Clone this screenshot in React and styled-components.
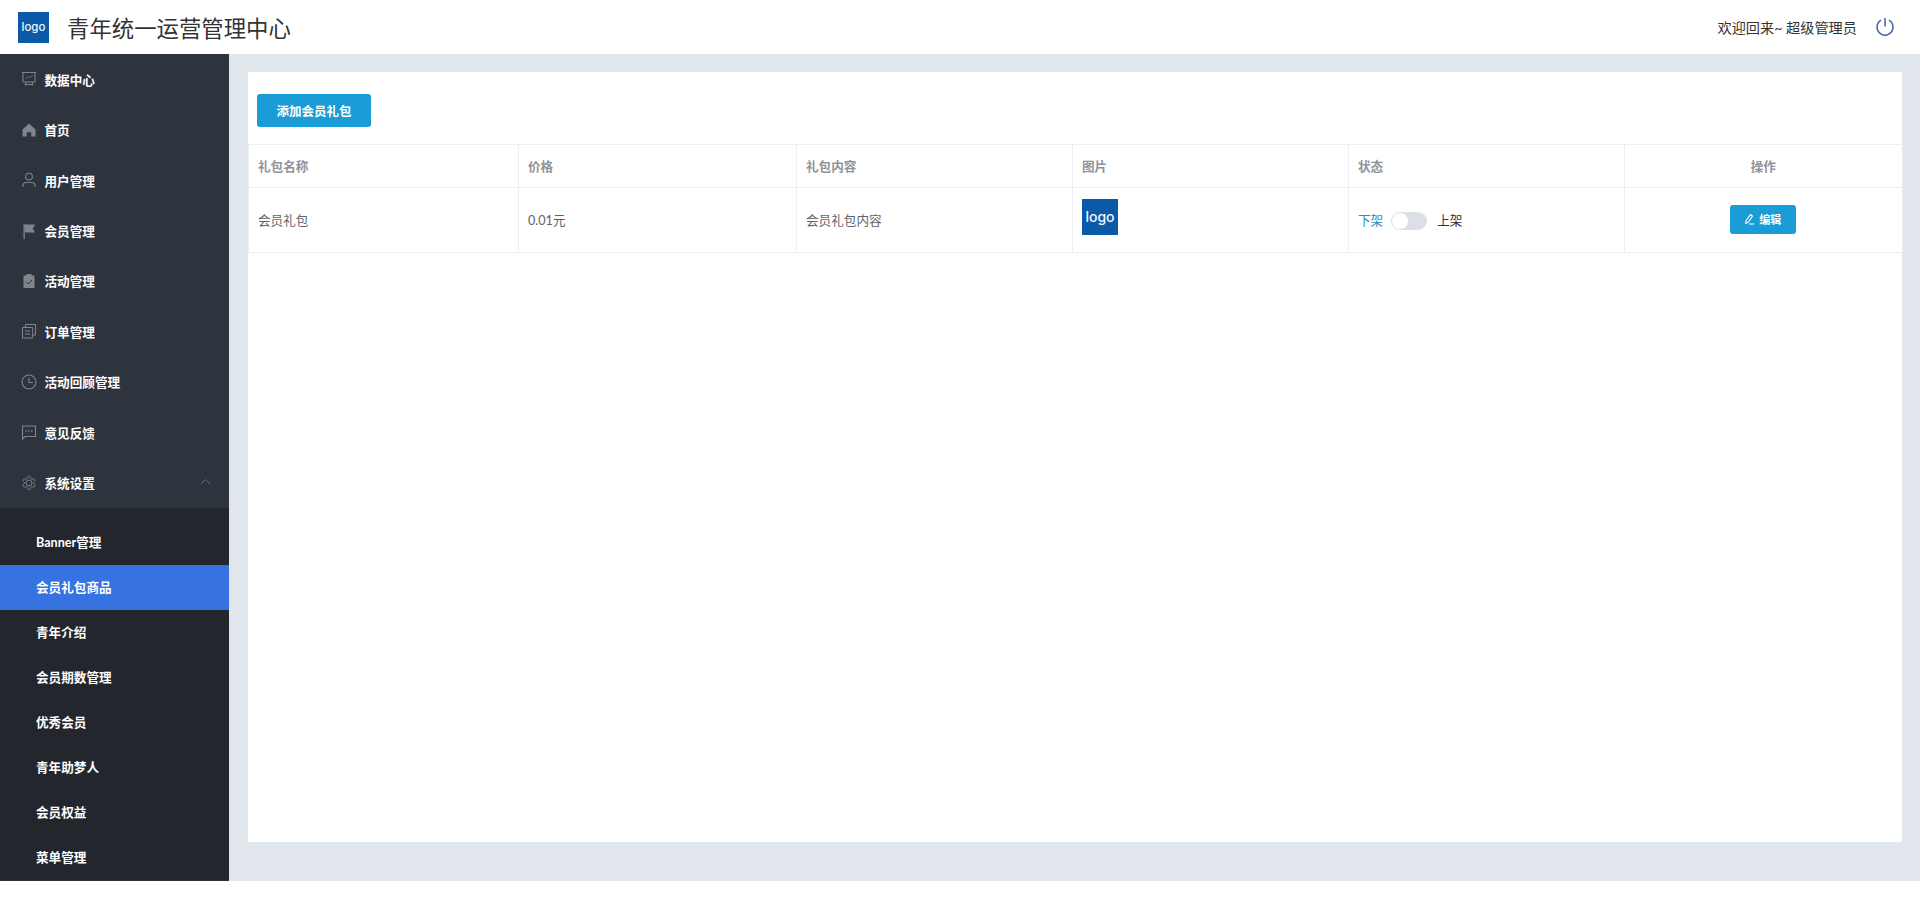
import React from 'react';
import styled, { createGlobalStyle } from 'styled-components';

const GlobalStyle = createGlobalStyle`
    html, body {
        margin: 0;
        padding: 0;
        background: #fff;
        font-family: "Lato", "Noto Sans CJK SC", sans-serif;
        overflow: hidden;
    }
`

const Page = styled.div`
    height: 881px;
    display: flex;
    flex-direction: column;
`

const TopBar = styled.header`
    height: 54px;
    flex: none;
    display: flex;
    align-items: center;
    padding: 0 25px 0 18px;
    background: #fff;
`

const LogoBox = styled.div`
    width: ${p => p.$size}px;
    height: ${p => p.$size}px;
    background: #0b5aa8;
    color: #f2f6fb;
    font-family: "Inter", sans-serif;
    font-weight: 500;
    font-size: ${p => p.$font}px;
    display: flex;
    align-items: center;
    justify-content: center;
    flex: none;
    margin-bottom: ${p => p.$lift || 0}px;
`

const Title = styled.h1`
    margin: 0 0 0 18px;
    font-size: 22.4px;
    font-weight: 400;
    color: #333;
    flex: 1;
`

const Welcome = styled.span`
    font-size: 14.2px;
    color: #333;
    margin-right: 18px;
`

const Body = styled.div`
    flex: 1;
    display: flex;
    min-height: 0;
`

const Sidebar = styled.aside`
    width: 229px;
    flex: none;
    background: #2e343e;
    overflow: hidden;
`

const NavRow = styled.div`
    height: 50.44px;
    box-sizing: border-box;
    padding: 0 18px 0 21px;
    display: flex;
    align-items: center;
    color: #fff;
    font-size: 12.6px;
    font-weight: 700;
`

const NavIcon = styled.svg`
    width: 16px;
    height: 16px;
    margin-right: 7.5px;
    flex: none;
    color: #80858d;
`

const Chevron = styled.svg`
    width: 11px;
    height: 7px;
    margin-left: auto;
    margin-bottom: 2px;
    color: #6b7078;
`

const SubMenu = styled.div`
    background: #23272d;
    padding-top: 12px;
`

const SubRow = styled.div`
    height: 45px;
    box-sizing: border-box;
    display: flex;
    align-items: center;
    padding: 0 0 1px 36px;
    color: #fff;
    font-size: 12.6px;
    font-weight: 700;
    background: ${p => (p.$active ? '#3672e0' : 'transparent')};
`

const Content = styled.main`
    flex: 1;
    background: #e1e6ed;
    padding: 18px 18px 39px 19px;
    display: flex;
    min-width: 0;
`

const Panel = styled.section`
    flex: 1;
    background: #fff;
    min-width: 0;
`

const Toolbar = styled.div`
    height: 72px;
    padding: 22px 0 0 9px;
    box-sizing: border-box;
`

const PrimaryButton = styled.button`
    height: 33px;
    width: 114px;
    padding: 0;
    border: none;
    border-radius: 3px;
    background: #1a9cd6;
    color: #fff;
    font-family: inherit;
    font-size: 12.5px;
    font-weight: 700;
    display: inline-flex;
    align-items: center;
    justify-content: center;
`

const EditButton = styled(PrimaryButton)`
    height: 29px;
    width: 66px;
    font-size: 11px;
    margin-right: 1px;
    vertical-align: middle;
`

const Table = styled.table`
    width: 100%;
    table-layout: fixed;
    border-collapse: collapse;
    font-size: 12.6px;
`

const HeadCell = styled.th`
    height: 41px;
    padding: 0 9.5px 1px 9px;
    border: 1px solid #ebeef3;
    color: #909399;
    font-weight: 700;
    text-align: ${p => p.$align || 'left'};
`

const Cell = styled.td`
    height: 62px;
    padding: 0 9.5px 2px 9px;
    border: 1px solid #ebeef3;
    color: #5f6368;
    text-align: ${p => p.$align || 'left'};
    vertical-align: middle;
`

const StatusRow = styled.div`
    display: flex;
    align-items: center;
    margin-top: 3px;
`

const StatusLabel = styled.span`
    color: ${p => (p.$on ? '#2b8fc6' : '#303133')};
    padding-bottom: 2px;
`

const Switch = styled.span`
    width: 36px;
    height: 18px;
    border-radius: 9px;
    background: #dcdfe6;
    margin: 0 10px 0 8px;
    padding: 1px;
    box-sizing: border-box;
    display: flex;
    &::before {
        content: '';
        width: 16px;
        height: 16px;
        border-radius: 50%;
        background: #fff;
    }
`

const PencilIcon = styled.svg`
    width: 11px;
    height: 12px;
    margin-right: 4px;
`

const PowerIcon = styled.svg`
    width: 20px;
    height: 20px;
    flex: none;
    color: #3f6a9e;
`

const icons = {
    chart: (
        <g fill="none" stroke="currentColor" strokeWidth="1">
            <path d="M1 1.5h14M2 1.5v9.5h12V1.5M4 14.5l1-3.5M12 14.5l-1-3.5M4 13.5h8" />
            <path d="M4.5 8l2.5-2.5 1.5 1.5 3-3" strokeWidth=".8" />
        </g>
    ),
    home: <path fill="currentColor" d="M8 1.5L1.5 7.5v7h4.2v-4.2h4.6v4.2h4.2v-7z" />,
    user: (
        <g fill="none" stroke="currentColor" strokeWidth="1.1">
            <circle cx="8" cy="4.6" r="3.4" />
            <path d="M2 15v-1.5c0-2 1.5-3 3-3h6c1.5 0 3 1 3 3V15" />
        </g>
    ),
    flag: (
        <g fill="currentColor">
            <path d="M2.5 1h1.3v15H2.5z" />
            <path d="M3.8 1.6h10.4l-2.6 3.9 2.6 4.1H3.8z" />
        </g>
    ),
    clipboard: (
        <g>
            <path fill="currentColor" d="M2.5 2.6h3V1h5v1.6h3V15h-11z" />
            <path fill="none" stroke="#2e343e" strokeWidth="1" d="M5 8.8l2.2 2.2L11 7" />
        </g>
    ),
    orders: (
        <g fill="none" stroke="currentColor" strokeWidth="1">
            <path d="M1.5 4.5h10.2v10.5H1.5z" />
            <path d="M4.5 4.5V1.5h10v10.5h-2.8" />
            <path d="M4 8h5M4 11h5" />
        </g>
    ),
    clock: (
        <g fill="none" stroke="currentColor" strokeWidth="1.1">
            <circle cx="8" cy="8" r="7" />
            <path d="M8 3.8V8.5h4" />
        </g>
    ),
    chat: (
        <g fill="none" stroke="currentColor" strokeWidth="1.1">
            <path d="M1.5 2h13v10.5H4L1.5 15z" />
            <path d="M4.5 7h1.4M7.3 7h1.4M10.1 7h1.4" strokeWidth="1.5" />
        </g>
    ),
    gear: (
        <g fill="none" stroke="currentColor" strokeWidth="1.4" transform="scale(.667)">
            <path d="M12.22 2h-.44a2 2 0 0 0-2 2v.18a2 2 0 0 1-1 1.73l-.43.25a2 2 0 0 1-2 0l-.15-.08a2 2 0 0 0-2.73.73l-.22.38a2 2 0 0 0 .73 2.73l.15.1a2 2 0 0 1 1 1.72v.51a2 2 0 0 1-1 1.74l-.15.09a2 2 0 0 0-.73 2.73l.22.38a2 2 0 0 0 2.73.73l.15-.08a2 2 0 0 1 2 0l.43.25a2 2 0 0 1 1 1.73V20a2 2 0 0 0 2 2h.44a2 2 0 0 0 2-2v-.18a2 2 0 0 1 1-1.73l.43-.25a2 2 0 0 1 2 0l.15.08a2 2 0 0 0 2.73-.73l.22-.39a2 2 0 0 0-.73-2.73l-.15-.08a2 2 0 0 1-1-1.74v-.5a2 2 0 0 1 1-1.74l.15-.09a2 2 0 0 0 .73-2.73l-.22-.38a2 2 0 0 0-2.73-.73l-.15.08a2 2 0 0 1-2 0l-.43-.25a2 2 0 0 1-1-1.73V4a2 2 0 0 0-2-2z" />
            <circle cx="12" cy="12" r="4.4" />
        </g>
    ),
}

const navItems = [
    { label: '数据中心', icon: 'chart' },
    { label: '首页', icon: 'home' },
    { label: '用户管理', icon: 'user' },
    { label: '会员管理', icon: 'flag' },
    { label: '活动管理', icon: 'clipboard' },
    { label: '订单管理', icon: 'orders' },
    { label: '活动回顾管理', icon: 'clock' },
    { label: '意见反馈', icon: 'chat' },
    { label: '系统设置', icon: 'gear', open: true },
]

const subItems = ['Banner管理', '会员礼包商品', '青年介绍', '会员期数管理', '优秀会员', '青年助梦人', '会员权益', '菜单管理']

const columns = [
    { label: '礼包名称', width: 270 },
    { label: '价格', width: 278 },
    { label: '礼包内容', width: 276 },
    { label: '图片', width: 276 },
    { label: '状态', width: 276 },
    { label: '操作', width: 278, align: 'center' },
]

export default function App() {
    return (
        <Page>
            <GlobalStyle />
            <TopBar>
                <LogoBox $size={31} $font={11.5}>logo</LogoBox>
                <Title>青年统一运营管理中心</Title>
                <Welcome>欢迎回来~ 超级管理员</Welcome>
                <PowerIcon viewBox="0 0 20 20" fill="none" stroke="currentColor" strokeWidth="1.5">
                    <path d="M6 3.2a8 8 0 1 0 8 0" />
                    <path d="M10 1v8.5" />
                </PowerIcon>
            </TopBar>
            <Body>
                <Sidebar>
                    {navItems.map(item => (
                        <NavRow key={item.label}>
                            <NavIcon viewBox="0 0 16 16">{icons[item.icon]}</NavIcon>
                            {item.label}
                            {item.open && (
                                <Chevron viewBox="0 0 11 7" fill="none" stroke="currentColor">
                                    <path d="M1 6l4.5-4.5L10 6" />
                                </Chevron>
                            )}
                        </NavRow>
                    ))}
                    <SubMenu>
                        {subItems.map(label => (
                            <SubRow key={label} $active={label === '会员礼包商品'}>{label}</SubRow>
                        ))}
                    </SubMenu>
                </Sidebar>
                <Content>
                    <Panel>
                        <Toolbar>
                            <PrimaryButton>添加会员礼包</PrimaryButton>
                        </Toolbar>
                        <Table>
                            <colgroup>
                                {columns.map(col => <col key={col.label} width={col.width} />)}
                            </colgroup>
                            <thead>
                                <tr>
                                    {columns.map(col => (
                                        <HeadCell key={col.label} $align={col.align}>{col.label}</HeadCell>
                                    ))}
                                </tr>
                            </thead>
                            <tbody>
                                <tr>
                                    <Cell>会员礼包</Cell>
                                    <Cell>0.01元</Cell>
                                    <Cell>会员礼包内容</Cell>
                                    <Cell><LogoBox $size={36} $font={14} $lift={5}>logo</LogoBox></Cell>
                                    <Cell>
                                        <StatusRow>
                                            <StatusLabel $on>下架</StatusLabel>
                                            <Switch />
                                            <StatusLabel>上架</StatusLabel>
                                        </StatusRow>
                                    </Cell>
                                    <Cell $align="center">
                                        <EditButton>
                                            <PencilIcon viewBox="0 0 11 12" fill="none" stroke="currentColor" strokeWidth="1.1">
                                                <path d="M6.5 1.5l2 1.5-4.5 6.5-2.3.8.2-2.3zM5 11h5" />
                                            </PencilIcon>
                                            编辑
                                        </EditButton>
                                    </Cell>
                                </tr>
                            </tbody>
                        </Table>
                    </Panel>
                </Content>
            </Body>
        </Page>
    );
}
